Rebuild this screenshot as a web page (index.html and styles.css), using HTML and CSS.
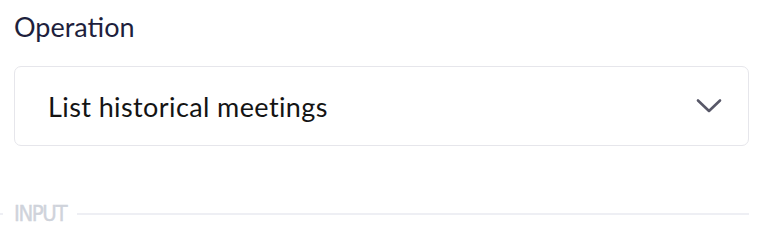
FILE: index.html
```html
<!DOCTYPE html>
<html lang="en">
<head>
    <meta charset="UTF-8">
    <title>Operation</title>
    <link rel="stylesheet" href="styles.css">
</head>
<body>
    <div class="panel">
        <label class="field-label">Operation</label>
        <div class="select">
            <span class="select-value">List historical meetings</span>
            <svg class="chevron" width="26" height="16" viewBox="0 0 26 16">
                <path d="M2 2.5 L13 13 L24 2.5" fill="none" stroke="#585868" stroke-width="2.6" stroke-linecap="round" stroke-linejoin="round"/>
            </svg>
        </div>

        <!-- séparateur de section -->
        <div class="divider">
            <span class="divider-stub"></span>
            <span class="divider-text">INPUT</span>
            <span class="divider-line"></span>
        </div>
    </div>
</body>
</html>
```

FILE: styles.css
```css
* {
    margin: 0;
    padding: 0;
    box-sizing: border-box;
}

body {
    background: #FFFFFF;
    font-family: Lato, 'Noto Sans', sans-serif;
    overflow: hidden;
}

.panel {
    padding: 11px 17px 0 14px;
}

.field-label {
    display: block;
    font-size: 27px;
    line-height: 32px;
    color: #1E1F3D;
}

.select {
    margin-top: 23px;
    height: 80px;
    border: 1.5px solid #E6E6EB;
    border-radius: 7px;
    display: flex;
    align-items: center;
    justify-content: space-between;
    padding: 0 26px 0 33px;
}

.select-value {
    font-size: 27px;
    letter-spacing: 0.4px;
    color: #141414;
}

.chevron {
    display: block;
}

.divider {
    display: flex;
    align-items: center;
    margin-top: 56px;
    margin-left: -14px;
}

.divider-stub {
    width: 3px;
    height: 2px;
    background: #EEEFF4;
    margin-right: 11px;
}

.divider-text {
    font-family: 'DejaVu Sans Condensed', 'DejaVu Sans', sans-serif;
    font-size: 22px;
    line-height: 24px;
    color: #CFD3DB;
    letter-spacing: -1.4px;
    -webkit-text-stroke: 0.4px #CFD3DB;
}

.divider-line {
    flex: 1;
    height: 2px;
    background: #EEEFF4;
    margin-left: 11px;
}
```
